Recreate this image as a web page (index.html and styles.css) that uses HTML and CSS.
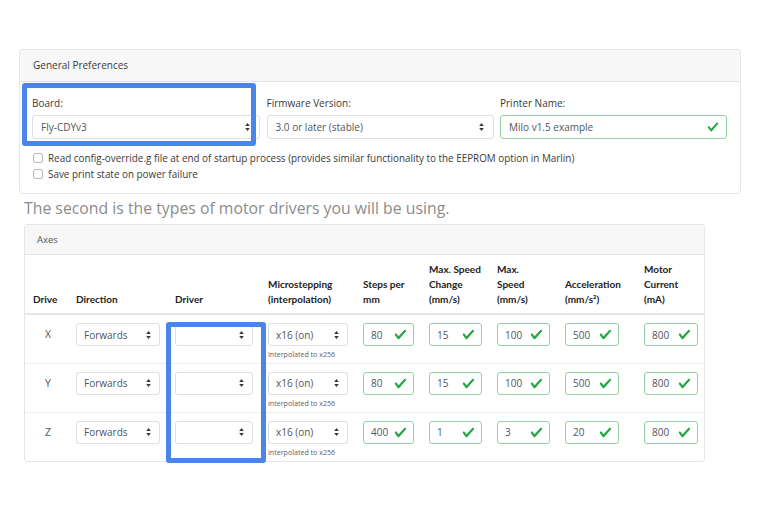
FILE: index.html
```html
<!DOCTYPE html>
<html lang="en">
<head>
<meta charset="utf-8">
<title>Configuration</title>
<link rel="stylesheet" href="styles.css">
</head>
<body>
<div class="page">
  <section class="card prefs">
    <div class="card-header">General Preferences</div>
    <div class="card-body">
      <div class="fields">
        <div class="field">
          <label class="lbl">Board:</label>
          <div class="select"><span>Fly-CDYv3</span><svg class="arrows" viewBox="0 0 4 7" width="5" height="8"><path d="M2 0L0 2.6h4zM2 7L0 4.4h4z" fill="#343a40"/></svg></div>
        </div>
        <div class="field">
          <label class="lbl">Firmware Version:</label>
          <div class="select"><span>3.0 or later (stable)</span><svg class="arrows" viewBox="0 0 4 7" width="5" height="8"><path d="M2 0L0 2.6h4zM2 7L0 4.4h4z" fill="#343a40"/></svg></div>
        </div>
        <div class="field">
          <label class="lbl">Printer Name:</label>
          <div class="input valid"><span>Milo v1.5 example</span><svg class="ok" viewBox="0 0 8 8" width="12" height="12"><path d="M2.3 6.73L.6 4.53c-.4-1.04.46-1.4 1.1-.8l1.1 1.4 3.4-3.8c.6-.63 1.6-.27 1.2.7l-4 4.6c-.43.5-.8.4-1.1.1z" fill="#28a745"/></svg></div>
        </div>
      </div>
      <div class="checks">
        <div class="check"><span class="box"></span>Read config-override.g file at end of startup process (provides similar functionality to the EEPROM option in Marlin)</div>
        <div class="check"><span class="box"></span>Save print state on power failure</div>
      </div>
    </div>
  </section>

  <h2 class="lead">The second is the types of motor drivers you will be using.</h2>

  <section class="card axes">
    <div class="card-header">Axes</div>
    <table class="grid">
      <colgroup>
        <col class="w1"><col class="w2"><col class="w3"><col class="w4"><col class="w5"><col class="w6"><col class="w7"><col class="w8"><col class="w9">
      </colgroup>
      <thead>
        <tr>
          <th class="first">Drive</th>
          <th>Direction</th>
          <th>Driver</th>
          <th>Microstepping<br>(interpolation)</th>
          <th>Steps per<br>mm</th>
          <th>Max. Speed<br>Change<br>(mm/s)</th>
          <th>Max.<br>Speed<br>(mm/s)</th>
          <th>Acceleration<br>(mm/s²)</th>
          <th>Motor<br>Current<br>(mA)</th>
        </tr>
      </thead>
      <tbody>
        <tr>
          <td class="first">X</td>
          <td><div class="select s-dir"><span>Forwards</span><svg class="arrows" viewBox="0 0 4 7" width="5" height="8"><path d="M2 0L0 2.6h4zM2 7L0 4.4h4z" fill="#343a40"/></svg></div></td>
          <td><div class="select s-drv"><span></span><svg class="arrows" viewBox="0 0 4 7" width="5" height="8"><path d="M2 0L0 2.6h4zM2 7L0 4.4h4z" fill="#343a40"/></svg></div></td>
          <td><div class="select s-mic"><span>x16 (on)</span><svg class="arrows" viewBox="0 0 4 7" width="5" height="8"><path d="M2 0L0 2.6h4zM2 7L0 4.4h4z" fill="#343a40"/></svg></div><div class="hint">interpolated to x256</div></td>
          <td><div class="input valid n51"><span>80</span><svg class="ok" viewBox="0 0 8 8" width="13" height="13"><path d="M2.3 6.73L.6 4.53c-.4-1.04.46-1.4 1.1-.8l1.1 1.4 3.4-3.8c.6-.63 1.6-.27 1.2.7l-4 4.6c-.43.5-.8.4-1.1.1z" fill="#28a745"/></svg></div></td>
          <td><div class="input valid n53"><span>15</span><svg class="ok" viewBox="0 0 8 8" width="13" height="13"><path d="M2.3 6.73L.6 4.53c-.4-1.04.46-1.4 1.1-.8l1.1 1.4 3.4-3.8c.6-.63 1.6-.27 1.2.7l-4 4.6c-.43.5-.8.4-1.1.1z" fill="#28a745"/></svg></div></td>
          <td><div class="input valid n53"><span>100</span><svg class="ok" viewBox="0 0 8 8" width="13" height="13"><path d="M2.3 6.73L.6 4.53c-.4-1.04.46-1.4 1.1-.8l1.1 1.4 3.4-3.8c.6-.63 1.6-.27 1.2.7l-4 4.6c-.43.5-.8.4-1.1.1z" fill="#28a745"/></svg></div></td>
          <td><div class="input valid n54"><span>500</span><svg class="ok" viewBox="0 0 8 8" width="13" height="13"><path d="M2.3 6.73L.6 4.53c-.4-1.04.46-1.4 1.1-.8l1.1 1.4 3.4-3.8c.6-.63 1.6-.27 1.2.7l-4 4.6c-.43.5-.8.4-1.1.1z" fill="#28a745"/></svg></div></td>
          <td><div class="input valid n54"><span>800</span><svg class="ok" viewBox="0 0 8 8" width="13" height="13"><path d="M2.3 6.73L.6 4.53c-.4-1.04.46-1.4 1.1-.8l1.1 1.4 3.4-3.8c.6-.63 1.6-.27 1.2.7l-4 4.6c-.43.5-.8.4-1.1.1z" fill="#28a745"/></svg></div></td>
        </tr>
        <tr>
          <td class="first">Y</td>
          <td><div class="select s-dir"><span>Forwards</span><svg class="arrows" viewBox="0 0 4 7" width="5" height="8"><path d="M2 0L0 2.6h4zM2 7L0 4.4h4z" fill="#343a40"/></svg></div></td>
          <td><div class="select s-drv"><span></span><svg class="arrows" viewBox="0 0 4 7" width="5" height="8"><path d="M2 0L0 2.6h4zM2 7L0 4.4h4z" fill="#343a40"/></svg></div></td>
          <td><div class="select s-mic"><span>x16 (on)</span><svg class="arrows" viewBox="0 0 4 7" width="5" height="8"><path d="M2 0L0 2.6h4zM2 7L0 4.4h4z" fill="#343a40"/></svg></div><div class="hint">interpolated to x256</div></td>
          <td><div class="input valid n51"><span>80</span><svg class="ok" viewBox="0 0 8 8" width="13" height="13"><path d="M2.3 6.73L.6 4.53c-.4-1.04.46-1.4 1.1-.8l1.1 1.4 3.4-3.8c.6-.63 1.6-.27 1.2.7l-4 4.6c-.43.5-.8.4-1.1.1z" fill="#28a745"/></svg></div></td>
          <td><div class="input valid n53"><span>15</span><svg class="ok" viewBox="0 0 8 8" width="13" height="13"><path d="M2.3 6.73L.6 4.53c-.4-1.04.46-1.4 1.1-.8l1.1 1.4 3.4-3.8c.6-.63 1.6-.27 1.2.7l-4 4.6c-.43.5-.8.4-1.1.1z" fill="#28a745"/></svg></div></td>
          <td><div class="input valid n53"><span>100</span><svg class="ok" viewBox="0 0 8 8" width="13" height="13"><path d="M2.3 6.73L.6 4.53c-.4-1.04.46-1.4 1.1-.8l1.1 1.4 3.4-3.8c.6-.63 1.6-.27 1.2.7l-4 4.6c-.43.5-.8.4-1.1.1z" fill="#28a745"/></svg></div></td>
          <td><div class="input valid n54"><span>500</span><svg class="ok" viewBox="0 0 8 8" width="13" height="13"><path d="M2.3 6.73L.6 4.53c-.4-1.04.46-1.4 1.1-.8l1.1 1.4 3.4-3.8c.6-.63 1.6-.27 1.2.7l-4 4.6c-.43.5-.8.4-1.1.1z" fill="#28a745"/></svg></div></td>
          <td><div class="input valid n54"><span>800</span><svg class="ok" viewBox="0 0 8 8" width="13" height="13"><path d="M2.3 6.73L.6 4.53c-.4-1.04.46-1.4 1.1-.8l1.1 1.4 3.4-3.8c.6-.63 1.6-.27 1.2.7l-4 4.6c-.43.5-.8.4-1.1.1z" fill="#28a745"/></svg></div></td>
        </tr>
        <tr>
          <td class="first">Z</td>
          <td><div class="select s-dir"><span>Forwards</span><svg class="arrows" viewBox="0 0 4 7" width="5" height="8"><path d="M2 0L0 2.6h4zM2 7L0 4.4h4z" fill="#343a40"/></svg></div></td>
          <td><div class="select s-drv"><span></span><svg class="arrows" viewBox="0 0 4 7" width="5" height="8"><path d="M2 0L0 2.6h4zM2 7L0 4.4h4z" fill="#343a40"/></svg></div></td>
          <td><div class="select s-mic"><span>x16 (on)</span><svg class="arrows" viewBox="0 0 4 7" width="5" height="8"><path d="M2 0L0 2.6h4zM2 7L0 4.4h4z" fill="#343a40"/></svg></div><div class="hint">interpolated to x256</div></td>
          <td><div class="input valid n51"><span>400</span><svg class="ok" viewBox="0 0 8 8" width="13" height="13"><path d="M2.3 6.73L.6 4.53c-.4-1.04.46-1.4 1.1-.8l1.1 1.4 3.4-3.8c.6-.63 1.6-.27 1.2.7l-4 4.6c-.43.5-.8.4-1.1.1z" fill="#28a745"/></svg></div></td>
          <td><div class="input valid n53"><span>1</span><svg class="ok" viewBox="0 0 8 8" width="13" height="13"><path d="M2.3 6.73L.6 4.53c-.4-1.04.46-1.4 1.1-.8l1.1 1.4 3.4-3.8c.6-.63 1.6-.27 1.2.7l-4 4.6c-.43.5-.8.4-1.1.1z" fill="#28a745"/></svg></div></td>
          <td><div class="input valid n53"><span>3</span><svg class="ok" viewBox="0 0 8 8" width="13" height="13"><path d="M2.3 6.73L.6 4.53c-.4-1.04.46-1.4 1.1-.8l1.1 1.4 3.4-3.8c.6-.63 1.6-.27 1.2.7l-4 4.6c-.43.5-.8.4-1.1.1z" fill="#28a745"/></svg></div></td>
          <td><div class="input valid n54"><span>20</span><svg class="ok" viewBox="0 0 8 8" width="13" height="13"><path d="M2.3 6.73L.6 4.53c-.4-1.04.46-1.4 1.1-.8l1.1 1.4 3.4-3.8c.6-.63 1.6-.27 1.2.7l-4 4.6c-.43.5-.8.4-1.1.1z" fill="#28a745"/></svg></div></td>
          <td><div class="input valid n54"><span>800</span><svg class="ok" viewBox="0 0 8 8" width="13" height="13"><path d="M2.3 6.73L.6 4.53c-.4-1.04.46-1.4 1.1-.8l1.1 1.4 3.4-3.8c.6-.63 1.6-.27 1.2.7l-4 4.6c-.43.5-.8.4-1.1.1z" fill="#28a745"/></svg></div></td>
        </tr>
      </tbody>
    </table>
  </section>

  <div class="highlight hl-board"></div>
  <div class="highlight hl-driver"></div>
</div>
</body>
</html>
```

FILE: styles.css
```css
* { box-sizing: border-box; }

html, body {
  margin: 0;
  background: #ffffff;
}

body {
  font-family: "Open Sans", "Noto Sans", sans-serif;
  color: #333;
}

.page {
  position: relative;
  width: 760px;
  height: 512px;
  padding: 49px 19px 0;
  overflow: hidden;
}

.card {
  border: 1px solid #e6e6e6;
  border-radius: 3px;
  background: #fff;
}

.card-header {
  background: #f7f7f7;
  border-bottom: 1px solid #e3e3e3;
  color: #3a3a3a;
}

/* General preferences */
.prefs .card-header {
  height: 32px;
  padding: 0 13px;
  font-size: 10px;
  line-height: 31px;
}

.prefs .card-body {
  padding: 15px 13px 11px 12px;
}

.fields {
  display: grid;
  grid-template-columns: 228px 227px 227px;
  column-gap: 6.5px;
}

.lbl {
  display: block;
  font-size: 10px;
  line-height: 13px;
  margin-bottom: 5px;
  color: #3a3a3a;
}

.select,
.input {
  display: flex;
  align-items: center;
  height: 24px;
  border: 1px solid #dcdfe3;
  border-radius: 3px;
  padding: 0 7px 0 8px;
  font-size: 10px;
  color: #4f565c;
  background: #fff;
  white-space: nowrap;
}

.select span,
.input span {
  flex: 1;
}

.arrows {
  flex: none;
  margin-right: 2px;
}

.input.valid {
  border-color: #95d1a2;
}

.ok {
  flex: none;
}

.checks {
  margin-top: 11px;
}

.check {
  display: flex;
  align-items: center;
  font-size: 9.9px;
  line-height: 16px;
  color: #3a3a3a;
}

.box {
  width: 10px;
  height: 10px;
  border: 1px solid #b7bcc1;
  border-radius: 2px;
  margin: 0 5px 0 1px;
  background: #fff;
}

/* Heading */
.lead {
  margin: 4px 0 6px 5px;
  font-family: "Open Sans", "Noto Sans", sans-serif;
  font-weight: 400;
  font-size: 15.8px;
  line-height: 20px;
  color: #8c8c8c;
}

/* Axes card */
.axes {
  margin-left: 5px;
  width: 681px;
  border-radius: 3px;
}

.axes .card-header {
  height: 30px;
  padding: 0 12px;
  font-size: 9.5px;
  line-height: 29px;
  color: #555;
}

.grid {
  width: 679px;
  border-collapse: collapse;
  table-layout: fixed;
}

.w1 { width: 51px; }
.w2 { width: 99px; }
.w3 { width: 93px; }
.w4 { width: 95px; }
.w5 { width: 66px; }
.w6 { width: 68px; }
.w7 { width: 68px; }
.w8 { width: 79px; }
.w9 { width: 60px; }

.grid th {
  height: 59px;
  padding: 0 0 6px 0;
  vertical-align: bottom;
  text-align: left;
  font-family: "Lato", "Open Sans", sans-serif;
  font-size: 10px;
  line-height: 15px;
  font-weight: 700;
  color: #222;
  border-bottom: 2px solid #e4e7ea;
  white-space: nowrap;
}

.grid th.first {
  padding-left: 8px;
}

.grid td {
  height: 49px;
  padding: 8px 0 0 0;
  vertical-align: top;
  border-top: 1px solid #eceef0;
}

.grid tbody tr:first-child td {
  border-top: none;
}

.grid td.first {
  padding-left: 20px;
  font-size: 10.5px;
  line-height: 23px;
  color: #555;
}

.grid .select,
.grid .input {
  height: 23px;
  padding: 0 6px 0 7px;
}

.s-dir { width: 84px; }
.s-drv { width: 78px; }
.s-mic { width: 80px; }
.n51 { width: 51px; }
.n53 { width: 53px; }
.n54 { width: 54px; }

.hint {
  margin-top: 3px;
  font-size: 7.1px;
  line-height: 10px;
  color: #5d6166;
  white-space: nowrap;
}

/* Highlight overlays drawn on top of the form */
.highlight {
  position: absolute;
  border: 5px solid #4a86e8;
  border-radius: 3px;
  pointer-events: none;
}

.hl-board {
  left: 22px;
  top: 83px;
  width: 234px;
  height: 63px;
}

.hl-driver {
  left: 166px;
  top: 322px;
  width: 100px;
  height: 141px;
}
```
